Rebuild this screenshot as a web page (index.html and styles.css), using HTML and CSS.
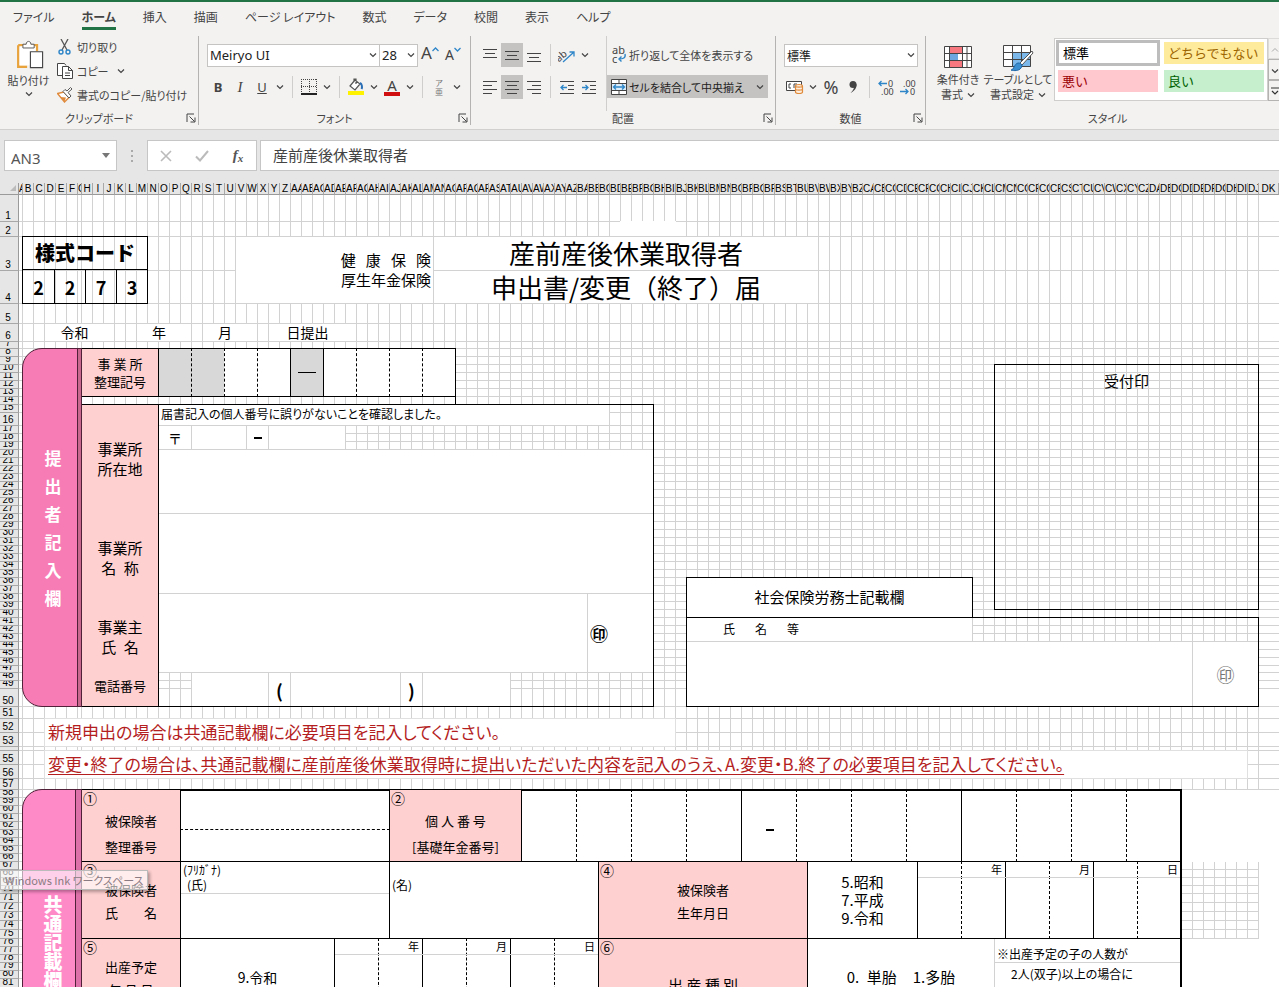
FILE: index.html
```html
<!DOCTYPE html>
<html lang="ja">
<head>
<meta charset="utf-8">
<title>産前産後休業取得者申出書</title>
<link rel="stylesheet" href="styles.css">
</head>
<body>
<svg class="defs" aria-hidden="true">
  <symbol id="chev" viewBox="0 0 8 8"><path d="M1 2.500l3 3 3-3" fill="none" stroke="#444" stroke-width="1.200"/></symbol>
  <symbol id="launch" viewBox="0 0 10 10"><path d="M1 9V1h7M3.500 3.500l5 5M9 4.500V9H4.500" fill="none" stroke="#444"/></symbol>
</svg>
<div class="app">
  <nav class="tabs">
    <button class="tab">ファイル</button>
    <button class="tab tab-on">ホーム</button>
    <button class="tab">挿入</button>
    <button class="tab">描画</button>
    <button class="tab">ページ レイアウト</button>
    <button class="tab">数式</button>
    <button class="tab">データ</button>
    <button class="tab">校閲</button>
    <button class="tab">表示</button>
    <button class="tab">ヘルプ</button>
  </nav>
  <div class="ribbon">
    <section class="group g-clip">
      <div class="body">
        <button class="big paste">
          <svg width="30" height="32" viewBox="0 0 30 32"><path d="M3.500 5.500H23.500V12M13 28.500H3.500V5.500" fill="#fff" stroke="#e8a33d" stroke-width="2.500"/><path d="M5 7h17v20H5z" fill="#fff"/><path d="M8.500 8.500V4.500h3.500c0-4 5-4 5 0h3.500v4z" fill="#fff" stroke="#555"/><path d="M16.500 12.500h13v17h-13z" fill="#fff" stroke="#444" stroke-width="1.200"/></svg>
          <span>貼り付け</span>
          <svg class="chev"><use href="#chev"/></svg>
        </button>
        <div class="stack">
          <button class="line"><svg width="16" height="16" viewBox="0 0 16 16"><path d="M4 0l6 11M11 0L5 11" fill="none" stroke="#555" stroke-width="1.300"/><circle cx="4" cy="13" r="2" fill="none" stroke="#2e86c8" stroke-width="1.400"/><circle cx="11" cy="13" r="2" fill="none" stroke="#2e86c8" stroke-width="1.400"/></svg><span>切り取り</span></button>
          <button class="line"><svg width="16" height="16" viewBox="0 0 16 16"><path d="M5 12.500H.5V.5h7l1.500 2" fill="#fff" stroke="#444"/><path d="M5.500 3.500h6l4 4v8h-10zM11.500 3.500v4h4M8 10h5M8 12.500h5" fill="#fff" stroke="#444"/></svg><span>コピー</span><svg class="chev"><use href="#chev"/></svg></button>
          <button class="line"><svg width="16" height="16" viewBox="0 0 16 16"><path d="M.5 6.500L7 5l5 5.500L7.500 15z" fill="#fff" stroke="#e08a3c" stroke-width="1.400"/><path d="M3 10l6 .5-1.500 4z" fill="#e08a3c"/><path d="M6 4.500l6 6.500 2-2-3-3.500 4-3.500L13.500.5 10 4 8 2.500z" fill="#fff" stroke="#555"/></svg><span>書式のコピー/貼り付け</span></button>
        </div>
      </div>
      <footer><span>クリップボード</span><svg class="launch"><use href="#launch"/></svg></footer>
    </section>
    <section class="group g-font">
      <div class="body rows">
        <div class="row">
          <label class="combo w-font"><select aria-label="フォント名"><option>Meiryo UI</option></select><svg class="chev"><use href="#chev"/></svg></label><label class="combo w-size"><select aria-label="フォント サイズ"><option>28</option></select><svg class="chev"><use href="#chev"/></svg></label>
          <button class="ic grow-a">A<svg width="7" height="5" viewBox="0 0 7 5"><path d="M.5 4l3-3 3 3" fill="none" stroke="#2e86c8" stroke-width="1.300"/></svg></button>
          <button class="ic shrink-a">A<svg width="7" height="5" viewBox="0 0 7 5"><path d="M.5 1l3 3 3-3" fill="none" stroke="#2e86c8" stroke-width="1.300"/></svg></button>
        </div>
        <div class="row">
          <button class="ic bold">B</button><button class="ic ital">I</button><button class="ic under">U</button><button class="ic dd"><svg class="chev"><use href="#chev"/></svg></button>
          <i class="sep"></i>
          <button class="ic"><svg width="16" height="16" viewBox="0 0 16 16"><path d="M.5 0v15M15.500 0v15M0 .5h16M8.500 0v15M0 7.500h16" fill="none" stroke="#444" stroke-dasharray="1 1"/><path d="M0 15h16" stroke="#222" stroke-width="2"/></svg></button><button class="ic dd"><svg class="chev"><use href="#chev"/></svg></button>
          <i class="sep"></i>
          <button class="ic"><svg width="18" height="18" viewBox="0 0 18 18"><path d="M8 2l-5 6 5 4 5-6zM7 4V1h2v5" fill="#fff" stroke="#555" stroke-width="1.200"/><path d="M13 5c2 1 2.500 4 1.500 6" fill="none" stroke="#2a6fb5" stroke-width="2"/><path d="M1 13h16v4H1z" fill="#fff200"/></svg></button><button class="ic dd"><svg class="chev"><use href="#chev"/></svg></button>
          <button class="ic colr">A</button><button class="ic dd"><svg class="chev"><use href="#chev"/></svg></button>
          <i class="sep"></i>
          <button class="ic ruby"><span>ア</span><span>亜</span></button><button class="ic dd"><svg class="chev"><use href="#chev"/></svg></button>
        </div>
      </div>
      <footer><span>フォント</span><svg class="launch"><use href="#launch"/></svg></footer>
    </section>
    <section class="group g-align">
      <div class="body">
        <div class="aligns">
          <div class="row">
            <button class="ic al"><svg width="14" height="14"><path d="M0 1.500h14M2 5.500h10M0 9.500h14" stroke="#444"/></svg></button>
            <button class="ic al on"><svg width="14" height="14"><path d="M0 3.500h14M2 7.500h10M0 11.500h14" stroke="#444"/></svg></button>
            <button class="ic al"><svg width="14" height="14"><path d="M0 5.500h14M2 9.500h10M0 13.500h14" stroke="#444"/></svg></button>
            <i class="sep"></i>
            <button class="ic al"><svg width="18" height="16" viewBox="0 0 18 16"><text x="-3" y="11" font-size="10" fill="#444" font-family="Noto Sans" transform="rotate(-40 5 8)">ab</text><path d="M5 15L16 5M11.500 5H16v4.500" fill="none" stroke="#2e86c8" stroke-width="1.300"/></svg></button><button class="ic dd"><svg class="chev"><use href="#chev"/></svg></button>
          </div>
          <div class="row">
            <button class="ic al"><svg width="14" height="14"><path d="M0 1.500h14M0 5.500h9M0 9.500h14M0 13.500h9" stroke="#444"/></svg></button>
            <button class="ic al on"><svg width="14" height="14"><path d="M0 1.500h14M2 5.500h10M0 9.500h14M2 13.500h10" stroke="#444"/></svg></button>
            <button class="ic al"><svg width="14" height="14"><path d="M0 1.500h14M5 5.500h9M0 9.500h14M5 13.500h9" stroke="#444"/></svg></button>
            <i class="sep"></i>
            <button class="ic al"><svg width="15" height="14"><path d="M0 1.500h14M8 5.500h6M8 9.500h6M0 13.500h14" stroke="#444"/><path d="M7 7.500H1M3.500 5L1 7.500 3.500 10" fill="none" stroke="#2e86c8" stroke-width="1.300"/></svg></button>
            <button class="ic al"><svg width="15" height="14"><path d="M0 1.500h14M8 5.500h6M8 9.500h6M0 13.500h14" stroke="#444"/><path d="M0 7.500h6M3.500 5L6 7.500 3.500 10" fill="none" stroke="#2e86c8" stroke-width="1.300"/></svg></button>
          </div>
        </div>
        <div class="wraps">
          <button class="wrapbtn"><svg width="16" height="18" viewBox="0 0 16 18"><text x="1" y="8" font-size="11" fill="#444" font-family="Noto Sans">ab</text><text x="1" y="17" font-size="11" fill="#444" font-family="Noto Sans">c</text><path d="M14 8c1 4-2 5-6 5M10.500 10.500L8 13l2.500 2.500" fill="none" stroke="#2e86c8" stroke-width="1.400"/></svg><span>折り返して全体を表示する</span></button>
          <button class="wrapbtn on"><svg width="16" height="16" viewBox="0 0 16 16"><path d="M.5.5h15v15H.5zM.5 4.500h15M.5 11.500h15M8 .5v4M8 11.500v4" fill="#fff" stroke="#444"/><path d="M1 5h14v6H1z" fill="#dcecf8"/><path d="M2.500 8h11M5 5.500L2.500 8 5 10.500M11 5.500L13.500 8 11 10.500" fill="none" stroke="#2e86c8" stroke-width="1.300"/></svg><span>セルを結合して中央揃え</span><svg class="chev"><use href="#chev"/></svg></button>
        </div>
      </div>
      <footer><span>配置</span><svg class="launch"><use href="#launch"/></svg></footer>
    </section>
    <section class="group g-num">
      <div class="body rows">
        <div class="row"><label class="combo w-num"><select aria-label="表示形式"><option>標準</option></select><svg class="chev"><use href="#chev"/></svg></label></div>
        <div class="row">
          <button class="ic"><svg width="18" height="16" viewBox="0 0 18 16"><path d="M.5 2.500h15v9H.5z" fill="#fff" stroke="#444"/><path d="M5 5H3v4h2M11 5H8v4" fill="none" stroke="#444"/><path d="M9.500 7v6c0 2 7 2 7 0V7c0-2-7-2-7 0c0 1.500 7 1.500 7 0M9.500 10c0 1.500 7 1.500 7 0" fill="#fdeedd" stroke="#e08a3c" stroke-width="1.200"/></svg></button><button class="ic dd"><svg class="chev"><use href="#chev"/></svg></button>
          <button class="ic pct">%</button>
          <button class="ic"><svg width="10" height="14" viewBox="0 0 10 14"><circle cx="5" cy="4.500" r="3.500" fill="#444"/><path d="M8.500 4c.5 4-2 7-6 9 2-2 3.500-4 3.500-6z" fill="#444"/></svg></button>
          <i class="sep"></i>
          <button class="ic"><svg width="17" height="17" viewBox="0 0 17 17"><text x="10" y="8" font-size="9" fill="#444" font-family="Noto Sans">0</text><text x="3" y="16" font-size="9" fill="#444" font-family="Noto Sans">.00</text><path d="M9 4.500H1M3.500 2L1 4.500 3.500 7" fill="none" stroke="#2e86c8" stroke-width="1.300"/></svg></button>
          <button class="ic"><svg width="17" height="17" viewBox="0 0 17 17"><text x="3" y="8" font-size="9" fill="#444" font-family="Noto Sans">.00</text><text x="10" y="16" font-size="9" fill="#444" font-family="Noto Sans">0</text><path d="M0 12.500h8M5.500 10L8 12.500 5.500 15" fill="none" stroke="#2e86c8" stroke-width="1.300"/></svg></button>
        </div>
      </div>
      <footer><span>数値</span><svg class="launch"><use href="#launch"/></svg></footer>
    </section>
    <section class="group g-style">
      <div class="body">
        <button class="big"><svg width="28" height="26" viewBox="0 0 28 26"><path d="M.5 2.500h27v21H.5z" fill="#fff"/><path d="M5 2.500h14v7H5zM5 16.500h14v7H5z" fill="#f8787f"/><path d="M5 9.500h9v7H5z" fill="#6ea6e0"/><path d="M.5 2.500h27v21H.5zM5.500 2.500v21M18.500 2.500v21M23 2.500v21M.5 9.500h27M.5 16.500h27" fill="none" stroke="#444"/></svg><span>条件付き</span><span class="inl">書式 <svg class="chev"><use href="#chev"/></svg></span></button>
        <button class="big wide"><svg width="32" height="28" viewBox="0 0 32 28"><path d="M1.500 2.500h27v21h-27z" fill="#fff"/><path d="M10 9h19v15H10z" fill="#7cb8ea"/><path d="M1.500 2.500h27v21h-27zM10.500 2.500v21M19.500 2.500v21M1.500 9.500h27M1.500 16.500h27" fill="none" stroke="#444"/><path d="M30 8L18 20l2 2L31 10z" fill="#fff" stroke="#555"/><path d="M9 27c3 0 3-6 7-7 4 0 5 3 3 5-2 3-7 3-10 2z" fill="#3b8fd0" stroke="#1c65a5"/></svg><span>テーブルとして</span><span class="inl">書式設定 <svg class="chev"><use href="#chev"/></svg></span></button>
        <div class="gallery">
          <button class="sty s-std">標準</button><button class="sty s-neu">どちらでもない</button>
          <button class="sty s-bad">悪い</button><button class="sty s-good">良い</button>
        </div>
        <div class="scroller">
          <button class="sc off" aria-label="上へ"><svg width="8" height="8" viewBox="0 0 8 8"><path d="M1 5.500l3-3 3 3" fill="none" stroke="#aaa"/></svg></button>
          <button class="sc" aria-label="下へ"><svg class="chev"><use href="#chev"/></svg></button>
          <button class="sc" aria-label="その他"><svg width="8" height="9" viewBox="0 0 8 9"><path d="M0 1h8M1 4l3 3 3-3" fill="none" stroke="#333" stroke-width="1.200"/></svg></button>
        </div>
      </div>
      <footer><span>スタイル</span></footer>
    </section>
  </div>
  <div class="fbar">
    <label class="namebox"><input value="AN3" aria-label="名前ボックス"><svg width="8" height="5" viewBox="0 0 8 5"><path d="M0 0h8L4 5z" fill="#777"/></svg></label>
    <span class="dots"><b></b><b></b><b></b></span>
    <div class="fbtns">
      <button aria-label="キャンセル"><svg width="12" height="12" viewBox="0 0 12 12"><path d="M1 1l10 10M11 1L1 11" stroke="#bbb" stroke-width="1.600"/></svg></button>
      <button aria-label="入力"><svg width="14" height="12" viewBox="0 0 14 12"><path d="M1 6.500l4 4L13 1" fill="none" stroke="#bbb" stroke-width="2"/></svg></button>
      <button class="fx" aria-label="関数の挿入">f<small>x</small></button>
    </div>
    <input class="formula" value="産前産後休業取得者" aria-label="数式バー">
  </div>
  <main class="sheet" id="sheet">
    <div class="corner"><svg width="8" height="8" viewBox="0 0 8 8"><path d="M7 1v6H1z" fill="#bbb"/></svg></div>
    <div class="vlines-a"></div>
    <div class="vlines-b"></div>

    <div class="cell blank" data-box="56 1 61 2"></div>
    <div class="code" data-box="1 2 13 4">
      <strong>様式コード</strong><b>2</b><b>2</b><b>7</b><b>3</b>
    </div>
    <div class="cell ins" data-box="21 2 39 4"><span>健&nbsp;&nbsp;&nbsp;康&nbsp;&nbsp;&nbsp;保&nbsp;&nbsp;&nbsp;険</span><span>厚生年金保険</span></div>
    <h1 class="cell title" data-box="39 2 74 3">産前産後休業取得者</h1>
    <h1 class="cell title" data-box="39 3 74 4">申出書/変更（終了）届</h1>

    <div class="cell date" data-box="3 5 9 6">令和</div>
    <div class="cell date" data-box="12 5 16 6">年</div>
    <div class="cell date" data-box="18 5 22 6">月</div>
    <div class="cell date" data-box="24 5 31 6">日提出</div>

    <div class="side" data-box="1 7 7 50"><p class="v-wide">提<br>出<br>者<br>記<br>入<br>欄</p></div>
    <div class="cell pink k" data-box="7 7 14 13"><span>事 業 所</span><span>整理記号</span></div>
    <div class="cell grey kt" data-box="14 7 17 13"></div>
    <div class="cell grey kt dl" data-box="17 7 20 13"></div>
    <div class="cell kt dl" data-box="20 7 23 13"></div>
    <div class="cell kt dl" data-box="23 7 26 13"></div>
    <div class="cell grey k dash" data-box="26 7 29 13"><i></i></div>
    <div class="cell kt" data-box="29 7 32 13"></div>
    <div class="cell kt dl" data-box="32 7 35 13"></div>
    <div class="cell kt dl" data-box="35 7 38 13"></div>
    <div class="cell kt dl" data-box="38 7 41 13"></div>
    <div class="frame rt" data-box="14 7 41 14"></div>

    <div class="cell pink k" data-box="7 14 14 50"></div>
    <div class="lab" data-box="7 14 14 27"><span>事業所</span><span>所在地</span></div>
    <div class="lab" data-box="7 27 14 38"><span>事業所</span><span>名&ensp;称</span></div>
    <div class="lab" data-box="7 38 14 47"><span>事業主</span><span>氏&ensp;名</span></div>
    <div class="lab small" data-box="7 46 14 50"><span>電話番号</span></div>
    <div class="cell msg" data-box="14 14 55 16">届書記入の個人番号に誤りがないことを確認しました。</div>
    <div class="cell mid post" data-box="14 16 17 19">〒</div>
    <div class="cell" data-box="17 16 22 19"></div>
    <div class="cell mid" data-box="22 16 24 19"><i class="hy"></i></div>
    <div class="cell" data-box="24 16 31 19"></div>
    <div class="cell" data-box="14 19 59 27"></div>
    <div class="cell" data-box="14 27 59 37"></div>
    <div class="cell" data-box="14 37 53 47"></div>
    <div class="cell seal" data-box="53 37 59 47">㊞</div>
    <div class="cell" data-box="17 47 24 50"></div>
    <div class="cell mid paren" data-box="24 47 26 50">(</div>
    <div class="cell" data-box="26 47 36 50"></div>
    <div class="cell mid paren" data-box="36 47 38 50">)</div>
    <div class="cell" data-box="38 47 46 50"></div>
    <div class="frame" data-box="14 14 59 50"></div>

    <div class="frame stamp" data-box="90 9 114 39">受付印</div>
    <div class="cell k sr" data-box="62 35 88 40">社会保険労務士記載欄</div>
    <div class="cell names" data-box="62 40 88 43"><span>氏</span><span>名</span><span>等</span></div>
    <div class="cell" data-box="62 43 108 50"></div>
    <div class="cell mid faint" data-box="108 43 114 50">㊞</div>
    <div class="frame" data-box="62 40 114 50"></div>

    <div class="cell note" data-box="3 51 61 53">新規申出の場合は共通記載欄に必要項目を記入してください。</div>
    <div class="cell note" data-box="3 54 113 56"><u>変更・終了の場合は、共通記載欄に産前産後休業取得時に提出いただいた内容を記入のうえ、A.変更・B.終了の必要項目を記入してください。</u></div>

    <div class="cell blank wipe" data-box="107 57 114 66"></div>
    <div class="cell blank wipe" data-box="107 75 114 85"></div>
    <div class="cell blank wipe" data-box="114 57 115 85"></div>

    <div class="side two" data-box="1 57 7 85"><p class="v-tight">共<br>通<br>記<br>載<br>欄</p></div>
    <div class="cell pink k item" data-box="7 57 16 66"><em>①</em><p><span>被保険者</span><span>整理番号</span></p></div>
    <div class="cell k db" data-box="16 57 35 62"></div>
    <div class="cell k nt" data-box="16 62 35 66"></div>
    <div class="cell pink k item" data-box="35 57 47 66"><em>②</em><p><span>個 人 番 号</span><span>[基礎年金番号]</span></p></div>
    <div class="cell kt" data-box="47 57 52 66"></div>
    <div class="cell kt dl" data-box="52 57 57 66"></div>
    <div class="cell kt dl" data-box="57 57 62 66"></div>
    <div class="cell kt dl" data-box="62 57 67 66"></div>
    <div class="cell kt kl mid hyc" data-box="67 57 72 66"><i class="hy"></i></div>
    <div class="cell kt dl" data-box="72 57 77 66"></div>
    <div class="cell kt dl" data-box="77 57 82 66"></div>
    <div class="cell kt dl" data-box="82 57 87 66"></div>
    <div class="cell kt kl" data-box="87 57 92 66"></div>
    <div class="cell kt dl" data-box="92 57 97 66"></div>
    <div class="cell kt dl" data-box="97 57 102 66"></div>
    <div class="cell kt dl" data-box="102 57 107 66"></div>

    <div class="cell pink k item near" data-box="7 66 16 75"><em>③</em><p><span>被保険者</span><span>氏　　名</span></p></div>
    <div class="cell k kana" data-box="16 66 35 68">(ﾌﾘｶﾞﾅ)</div>
    <div class="cell k kana" data-box="35 66 54 68"></div>
    <div class="cell kl fam" data-box="16 68 35 70">(氏)</div>
    <div class="cell kl" data-box="16 70 35 75"></div>
    <div class="cell kl giv" data-box="35 68 54 75">(名)</div>
    <div class="frame nt" data-box="16 68 54 75"></div>
    <div class="cell pink k item near" data-box="54 66 73 75"><em>④</em><p><span>被保険者</span><span>生年月日</span></p></div>
    <div class="cell k era" data-box="73 66 83 75"><span>5.昭和</span><span>7.平成</span><span>9.令和</span></div>
    <div class="cell kt" data-box="83 66 87 75"></div>
    <div class="cell kt dl" data-box="87 66 91 75"></div>
    <div class="cell kt kl" data-box="91 66 95 75"></div>
    <div class="cell kt dl" data-box="95 66 99 75"></div>
    <div class="cell kt kl" data-box="99 66 103 75"></div>
    <div class="cell kt dl" data-box="103 66 107 75"></div>
    <div class="ymd" data-box="83 66 91 68">年</div>
    <div class="ymd" data-box="91 66 99 68">月</div>
    <div class="ymd" data-box="99 66 107 68">日</div>

    <div class="cell pink k item near" data-box="7 75 16 84"><em>⑤</em><p><span>出産予定</span><span>年 月 日</span></p></div>
    <div class="cell k mid reiwa" data-box="16 75 30 84"><span>9.令和</span></div>
    <div class="cell kt" data-box="30 75 34 85"></div>
    <div class="cell kt dl" data-box="34 75 38 85"></div>
    <div class="cell kt kl" data-box="38 75 42 85"></div>
    <div class="cell kt dl" data-box="42 75 46 85"></div>
    <div class="cell kt kl" data-box="46 75 50 85"></div>
    <div class="cell kt dl" data-box="50 75 54 85"></div>
    <div class="ymd" data-box="30 75 38 77">年</div>
    <div class="ymd" data-box="38 75 46 77">月</div>
    <div class="ymd" data-box="46 75 54 77">日</div>
    <div class="cell pink k item kind" data-box="54 75 73 85"><em>⑥</em><p><span>出 産 種 別</span></p></div>
    <div class="cell k mid twin" data-box="73 75 90 84"><span>0.&ensp;単胎</span><span>1.多胎</span></div>
    <div class="cell memo" data-box="90 75 107 78">※出産予定の子の人数が</div>
    <div class="cell memo in" data-box="90 78 107 85">2人(双子)以上の場合に</div>
    <div class="frame" data-box="73 75 107 85"></div>
    <div class="frame thick" data-box="7 57 107 85"></div>

    <div class="tip" role="tooltip">Windows Ink ワークスペース</div>
  </main>
</div>
<script src="sheet.js"></script>
</body>
</html>
```
FILE: styles.css
```css
* { box-sizing: border-box; }
body { margin: 0; font-family: "Noto Sans CJK JP", "Noto Sans", sans-serif; font-size: 12px; color: #444; font-feature-settings: "palt"; }
button, input, select { font: inherit; font-feature-settings: inherit; color: inherit; margin: 0; padding: 0; border: 0; background: none; }
h1, p { margin: 0; font-weight: 400; }
.defs { display: none; }
.app { height: 100vh; overflow: hidden; background: #e6e6e6; border-top: 2px solid #217346; display: flex; flex-direction: column; }
.chev { width: 8px; height: 8px; flex: none; }
.launch { width: 10px; height: 10px; }

.tabs { display: flex; gap: 27px; padding-left: 13px; height: 30px; background: #f3f2f1; flex: none; }
.tab { line-height: 30px; white-space: nowrap; }
.tab-on { font-weight: 700; box-shadow: inset 0 -3px #217346; height: 28px; }

.ribbon { display: flex; height: 98px; padding: 4px 0 0; background: #f3f2f1; border-bottom: 1px solid #d2d0ce; flex: none; font-size: 11px; }
.group { display: flex; flex-direction: column; border-right: 1px solid #b5b3b1; margin-bottom: 4px; flex: none; }
.body { flex: 1; display: flex; min-height: 0; }
.group footer { display: flex; height: 14px; line-height: 14px; align-items: center; padding: 0 2px 0 12px; }
.group footer span { flex: 1; text-align: center; }
.g-clip { width: 199px; }
.g-font { width: 272px; }
.g-align { width: 305px; }
.g-num { width: 150px; }
.g-style { flex: 1; border: 0; min-width: 0; }

.big { display: flex; flex: none; flex-direction: column; align-items: center; line-height: 15px; width: 64px; padding-top: 6px; white-space: nowrap; }
.big > svg:first-child { height: 30px; flex: none; }
.big .inl { display: flex; gap: 4px; align-items: center; }
.big.wide { width: 56px; }
.big.paste { width: 57px; padding-top: 4px; }
.paste > span { line-height: 20px; }
.stack { display: flex; flex-direction: column; gap: 4px; padding-top: 1px; }
.line { display: flex; gap: 4px; align-items: center; height: 20px; white-space: nowrap; }
.line .chev { margin-left: 4px; }

.rows, .aligns, .wraps { display: flex; flex-direction: column; gap: 8px; padding: 7px 0 0 8px; }
.row { display: flex; flex: none; height: 24px; align-items: center; }
.combo { display: grid; align-items: center; height: 23px; background: #fff; border: 1px solid #c6c4c2; color: #222; }
.combo select { grid-area: 1 / 1; appearance: none; padding-left: 2px; width: 100%; }
.combo .chev { grid-area: 1 / 1; justify-self: end; margin-right: 2px; }
.w-font { width: 173px; font-size: 13px; font-family: "Noto Sans", sans-serif; }
.w-size { width: 39px; margin-left: -1px; font-size: 13px; font-family: "Noto Sans", sans-serif; }
.w-num { width: 134px; font-size: 12px; }
.ic { display: flex; align-items: center; justify-content: center; width: 22px; height: 24px; font-size: 12px; font-family: "Noto Sans", sans-serif; }
.ic.dd { width: 14px; }
.grow-a { font-size: 17px; width: 24px; align-items: flex-start; line-height: 20px; }
.shrink-a { font-size: 14px; align-items: flex-start; line-height: 24px; }
.grow-a svg, .shrink-a svg { margin-top: 4px; }
.bold { font-weight: 700; font-size: 13px; }
.ital { font-style: italic; font-family: "Liberation Serif", serif; font-size: 15px; }
.under { text-decoration: underline; font-size: 13px; }
.colr { line-height: 13px; font-size: 15px; border-bottom: 4px solid #d01010; height: 17px; width: 16px; margin: 0 3px; }
.ruby { flex-direction: column; font-size: 8px; line-height: 9px; color: #777; font-family: "Noto Sans CJK JP", sans-serif; }
.sep { width: 1px; height: 22px; background: #d0cecc; margin: 0 5px; }
.on { background: #c5c3c1; }
.aligns { width: 136px; border-right: 1px solid #d0cecc; }
.wraps { padding-left: 0; }
.wrapbtn { display: flex; flex: none; gap: 2px; align-items: center; height: 24px; padding: 0 4px; white-space: nowrap; }
.wrapbtn.on { width: 161px; height: 23px; color: #222; }
.wrapbtn .chev { margin-left: auto; }
.pct { font-size: 18px; }

.gallery { display: grid; flex: none; grid-template-columns: 106px 106px; grid-template-rows: 28px 28px; margin: 2px 0 10px 8px; background: #fff; border: 1px solid #d0cecc; font-size: 13px; align-content: start; font-feature-settings: normal; }
.sty { margin: 3px; text-align: left; padding-left: 4px; line-height: 20px; white-space: nowrap; }
.s-std { margin: 1px; border: 3px solid #bdbdbd; color: #000; }
.s-neu { background: #ffeb9c; color: #9c6500; }
.s-bad { background: #ffc7ce; color: #9c0006; }
.s-good { background: #c6efce; color: #006100; }
.scroller { display: flex; flex-direction: column; margin: 2px 0 10px; flex: 1; min-width: 0; }
.sc { flex: 1; border: 1px solid #b5b3b1; overflow: hidden; min-width: 14px; }
.sc.off { border-color: #dddbd9; }

.fbar { display: flex; height: 31px; margin: 10px 0 12px; flex: none; color: #555; }
.namebox { display: flex; align-items: center; width: 113px; margin-left: 4px; background: #fff; border: 1px solid #c6c6c6; padding: 0 6px; }
.namebox input { flex: 1; min-width: 0; font: 15px "Noto Sans", sans-serif; color: #555; padding-top: 4px; }
.dots { display: flex; flex-direction: column; gap: 3px; justify-content: center; padding: 0 14px; }
.dots b { width: 2px; height: 2px; background: #aaa; }
.fbtns { display: flex; width: 110px; background: #fff; border: 1px solid #c6c6c6; }
.fbtns button { flex: 1; display: flex; align-items: center; justify-content: center; }
.fbtns .fx { font: italic bold 15px "Liberation Serif", serif; }
.fx small { font-size: 11px; padding-top: 4px; }
.formula { flex: 1; min-width: 0; margin-left: 3px; background: #fff; border: 1px solid #c6c6c6; border-right: 0; padding: 0 12px 2px; font-size: 15px; color: #444; }

.sheet { flex: 1; position: relative; display: grid; background: #fff; color: #000; overflow: hidden; align-content: start;
  grid-template-columns: 19px 4px repeat(5, 11px) 4px repeat(107, 11px) 1fr;
  grid-template-rows: 12px 27px 15px 34px 33px 20px 18px 7px repeat(8, 8px) 13px repeat(30, 8px) 7px 8px 8px 18px 12px 14px 14px 4px 14px 14px 11px repeat(13, 8px) repeat(5, 9px) repeat(5, 8px) repeat(5, 9px); }
.sheet > * { min-width: 0; min-height: 0; }
.corner, .col, .rowno { background: #e6e6e6; font: 10px/11px "Liberation Sans", sans-serif; overflow: hidden; }
.corner { grid-area: 1 / 1; border-right: 1px solid #9a9a9a; border-bottom: 1px solid #9a9a9a; padding-left: 9px; }
.col { grid-row: 1; border-right: 1px solid #a8a8a8; border-bottom: 1px solid #9a9a9a; text-align: center; white-space: nowrap; }
.rowno { grid-column: 1; border-right: 1px solid #9a9a9a; border-bottom: 1px solid #a8a8a8; display: flex; align-items: flex-end; justify-content: center; padding-right: 2px; }
.hline { grid-column: 2 / -1; border-bottom: 1px solid #d2d2d2; }
.vlines-a { grid-area: 2 / 2 / -1 / 9; background: repeating-linear-gradient(to right, transparent 0 3px, #d2d2d2 3px 4px, transparent 4px 11px); border-right: 1px solid #d2d2d2; }
.vlines-b { grid-area: 2 / 9 / -1 / 116; background: repeating-linear-gradient(to right, transparent 0 10px, #d2d2d2 10px 11px); }

.cell, .frame, .code, .side, .lab, .ymd { margin: -1px 0 0 -1px; }
.cell { background: #fff; border: 1px solid #d2d2d2; white-space: nowrap; }
.blank { border: 0; }
.wipe { margin: 0; }
.frame { border: 1px solid #000; }
.cell.k { border-color: #000; }
.cell.kt { border-color: #000; border-right: 0; }
.cell.kl { border-left-color: #000; }
.cell.dl { border-left: 1px dashed #000; }
.cell.db { border-bottom: 0; }
.cell.nt { border-top: 1px dashed #000; }
.frame.nt { border-top: 0; }
.frame.rt { border-width: 0 1px 0 0; }
.frame.thick { border-width: 2px 2px 0 1px; }
.cell.pink { background: #ffd0d0; }
.cell.grey { background: #d8d8d8; }
.mid, .dash { display: flex; align-items: center; justify-content: center; }
.hy { width: 8px; height: 2px; background: #000; }
.hyc { padding-top: 8px; }
.dash i { width: 18px; height: 1px; background: #000; }
.post { font-size: 14px; }

.code { display: grid; grid-template: 33px 1fr / repeat(4, 1fr); border: 1px solid #000; z-index: 1; }
.code > * { display: flex; align-items: center; justify-content: center; font-size: 18px; line-height: 20px; }
.code b + b { border-left: 1px solid #000; }
.code strong { grid-column: 1 / -1; font-size: 20px; font-feature-settings: normal; font-weight: 900; border-bottom: 1px solid #000; }
.ins { display: flex; flex-direction: column; align-items: flex-end; justify-content: center; font-size: 15px; line-height: 20px; padding-right: 2px; font-feature-settings: normal; }
.title { font-size: 26px; line-height: 32px; text-align: center; font-feature-settings: normal; }
.date { border: 0; margin: 0; height: 17px; font-size: 14px; line-height: 17px; text-align: center; font-feature-settings: normal; }

.side { position: relative; background: #f77cb5; border: 1px solid #502038; border-radius: 20px 0 0 20px; display: flex; align-items: center; color: #fff; z-index: 1; }
.side::after { content: ""; position: absolute; top: 0; bottom: 0; right: 0; width: 3px; background: #c8688f; border-left: 1px solid #502038; }
.side p { width: 100%; text-align: center; font-weight: 700; }
.side .v-wide { font-size: 17px; line-height: 28px; padding-left: 2px; }
.side.two { background: #ff8ac8; border-radius: 20px 0 0 0; align-items: flex-start; }
.side.two::after { width: 5px; background: #dd70a8; }
.side .v-tight { font-size: 19px; line-height: 19px; padding: 104px 0 0 2px; font-weight: 900; }

.pink.k { display: flex; flex-direction: column; align-items: center; justify-content: center; font-size: 13px; line-height: 18px; }
.lab { display: flex; flex-direction: column; align-items: center; justify-content: center; font-size: 15px; line-height: 20px; }
.lab.small { font-size: 13px; }
.msg { font-size: 12px; line-height: 18px; padding-left: 2px; }
.seal { font-size: 18px; font-weight: 700; display: flex; align-items: center; padding-left: 2px; }
.paren { font-size: 18px; font-weight: 700; }
.faint { font-size: 18px; color: #777; }
.stamp { font-size: 15px; line-height: 31px; text-align: center; }
.sr { font-size: 15px; line-height: 38px; text-align: center; }
.names { display: flex; gap: 20px; padding-left: 36px; font-size: 12px; line-height: 22px; }
.note { color: #b41e1e; font-size: 17px; line-height: 26px; padding-left: 3px; overflow: hidden; border-color: #e0e0e0; }
.note u { text-underline-offset: 3px; }

.pink.item { position: relative; }
.item em { position: absolute; left: 1px; top: 0; font-style: normal; font-size: 14px; line-height: 17px; }
.item p { display: flex; flex-direction: column; align-items: center; line-height: 26px; padding-top: 16px; }
.near p { line-height: 23px; padding-top: 2px; }
.kana { font-size: 12px; line-height: 15px; padding-left: 2px; }
.cell.kana { border-bottom: 1px dashed #000; }
.cell.fam, .cell.giv { font-size: 12px; line-height: 14px; padding-left: 6px; border-top: 0; padding-top: 1px; }
.cell.giv { padding-left: 2px; }
.era { display: flex; flex-direction: column; align-items: center; justify-content: center; font-size: 15px; line-height: 18px; }
.ymd { border-bottom: 1px solid #d2d2d2; margin-left: 0; text-align: right; font-size: 11px; line-height: 16px; padding-right: 4px; }
.reiwa { font-size: 14px; }
.twin { gap: 16px; font-size: 15px; }
.pink.kind p { font-size: 15px; padding-top: 8px; word-spacing: 0; }
.memo { font-size: 12px; line-height: 30px; padding-left: 2px; overflow: hidden; border-right: 0; }
.memo.in { padding-left: 16px; line-height: 22px; border-bottom: 0; }
.tip { position: absolute; left: 0; top: 687px; padding: 0 4px; height: 20px; line-height: 18px; font-size: 11px; background: rgba(255, 255, 255, .6); border: 1px solid #bbb; box-shadow: 2px 2px 3px rgba(0, 0, 0, .3); color: #8a7a82; white-space: nowrap; z-index: 2; }
```
FILE: sheet.js
```js
const sheet = document.getElementById('sheet');
const firstCell = sheet.querySelector('.vlines-a');

function colName(n) {
  let s = '';
  while (n > 0) {
    s = String.fromCharCode(65 + (n - 1) % 26) + s;
    n = Math.floor((n - 1) / 26);
  }
  return s;
}

for (let c = 1; c <= 115; c++) {
  const el = document.createElement('div');
  el.className = 'col';
  el.textContent = colName(c);
  el.style.gridColumn = c + 1;
  sheet.insertBefore(el, firstCell);
}

for (let r = 1; r <= 85; r++) {
  const no = document.createElement('div');
  no.className = 'rowno';
  no.textContent = r === 54 ? '' : r;
  no.style.gridRow = r + 1;
  const line = document.createElement('div');
  line.className = 'hline';
  line.style.gridRow = r + 1;
  sheet.insertBefore(no, firstCell);
  sheet.insertBefore(line, firstCell);
}

// data-box holds "left top right bottom" as the number of the column or row that the edge follows.
for (const el of sheet.querySelectorAll('[data-box]')) {
  const [left, top, right, bottom] = el.dataset.box.split(' ').map(n => Number(n) + 2);
  el.style.gridArea = `${top} / ${left} / ${bottom} / ${right}`;
}
```
